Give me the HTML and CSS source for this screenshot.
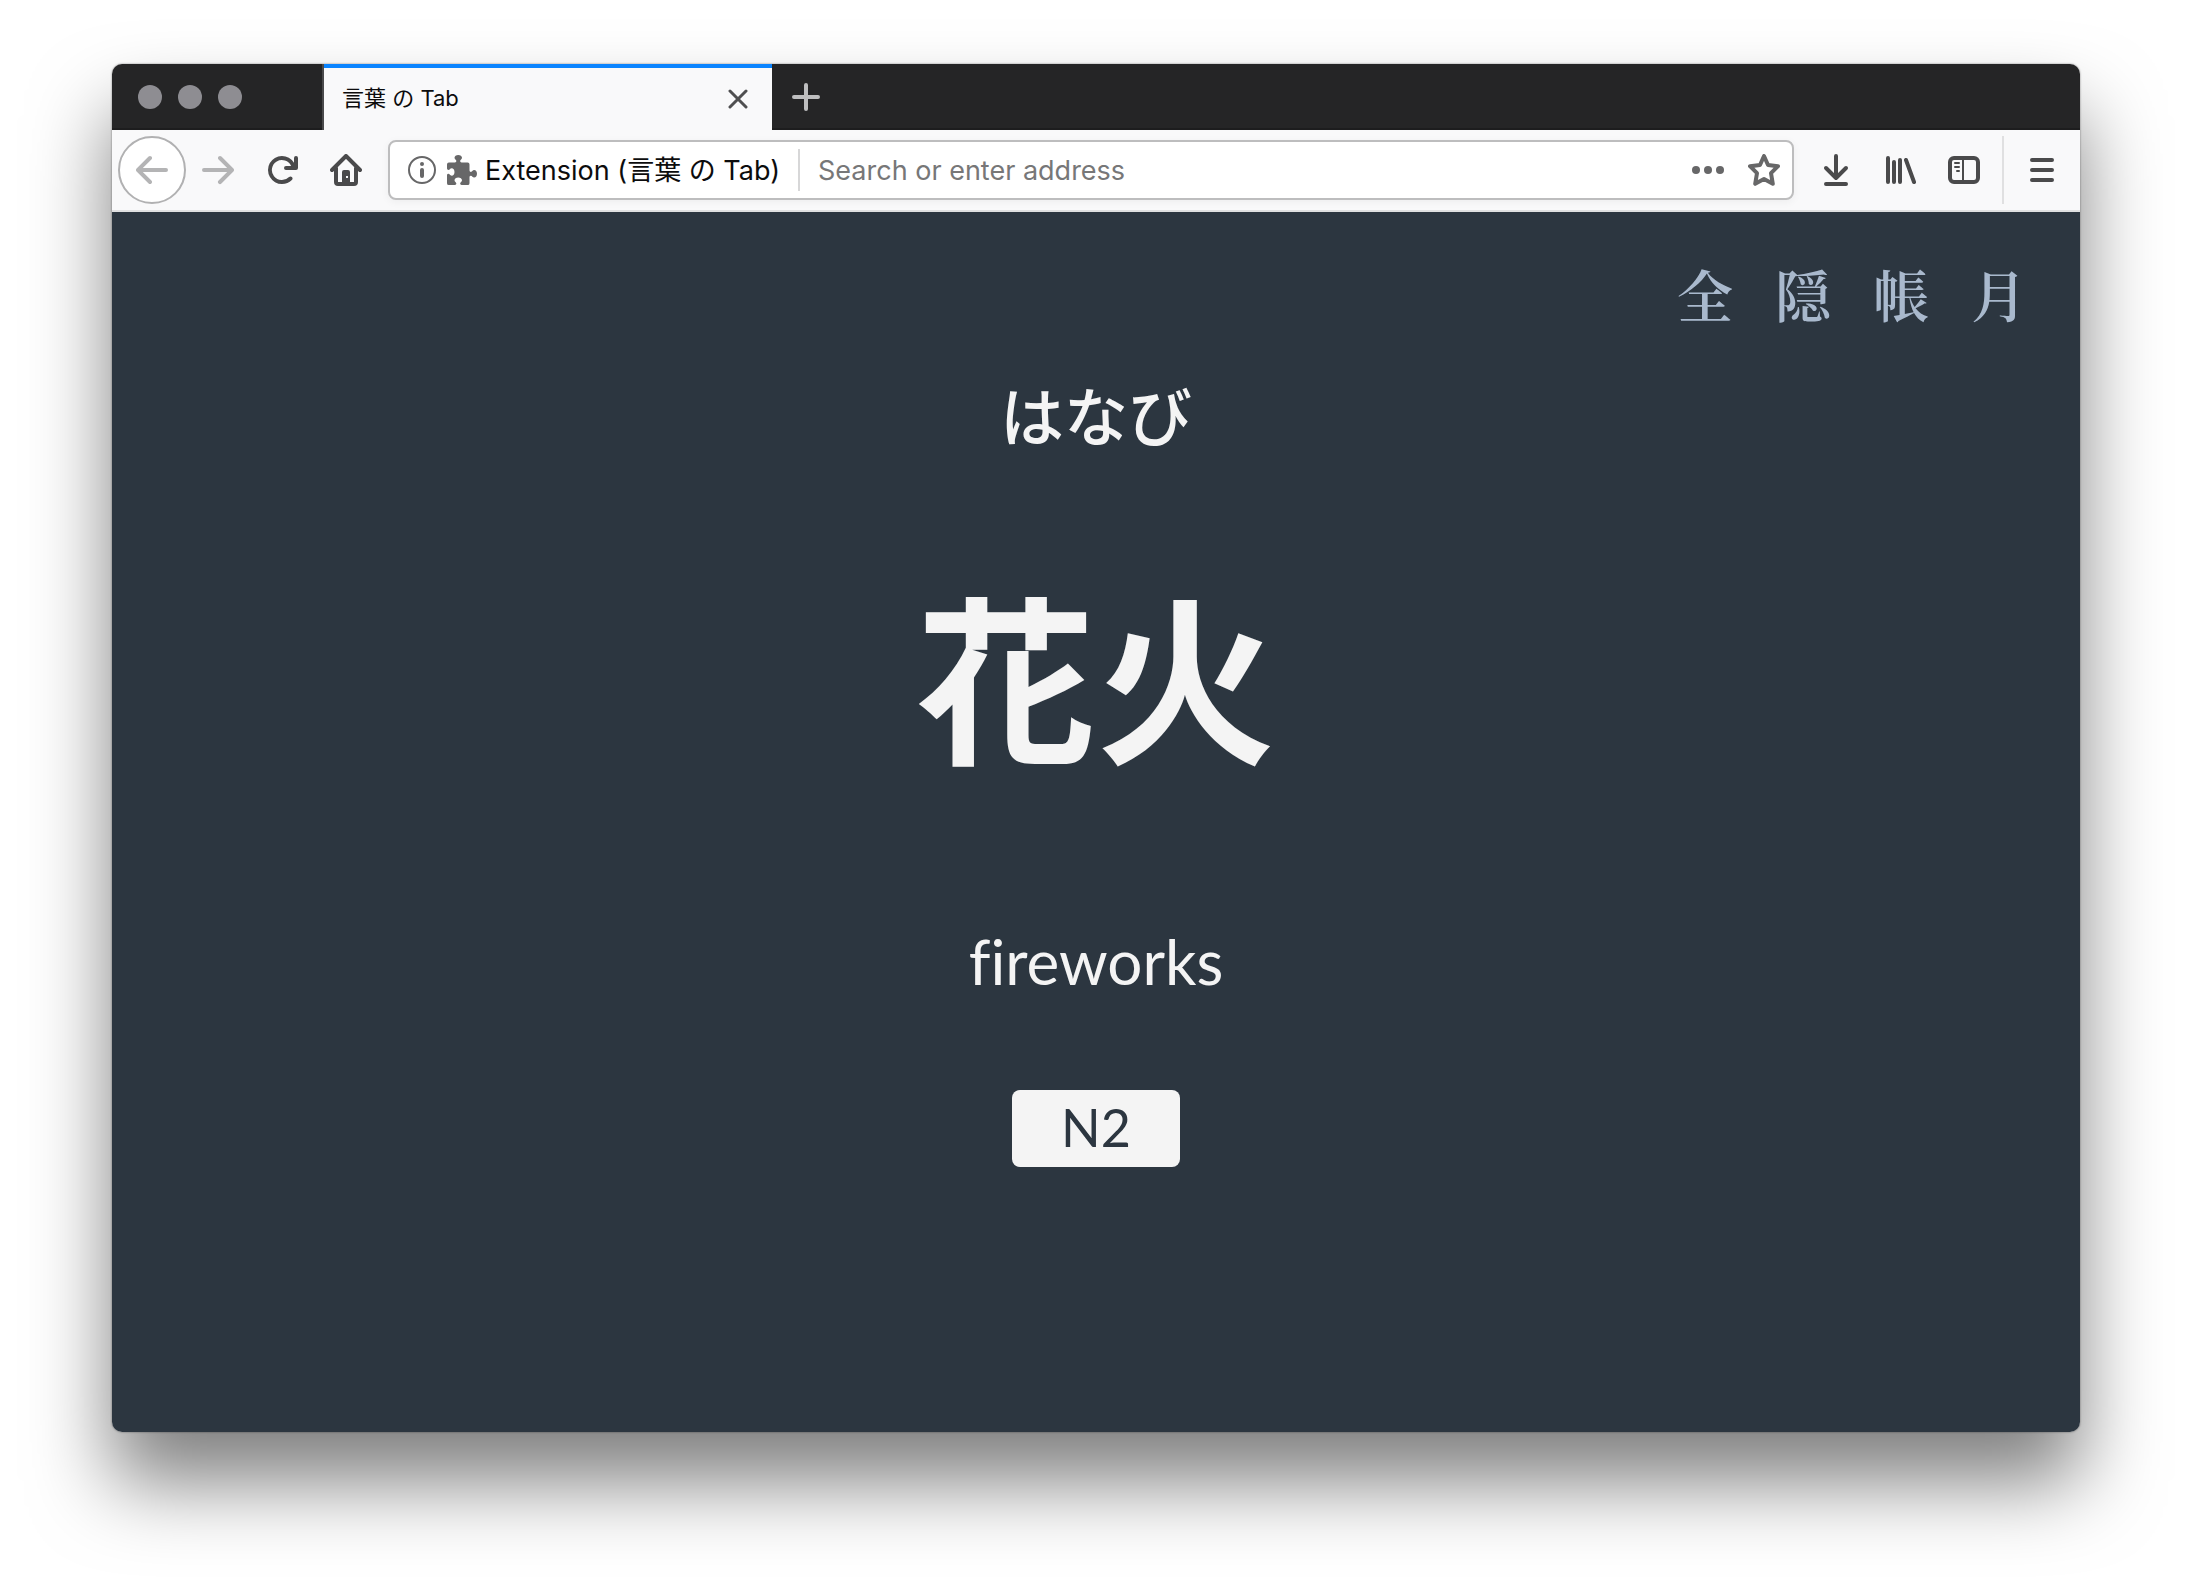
FILE: index.html
```html
<!DOCTYPE html>
<html lang="en">
<head>
<meta charset="utf-8">
<title>言葉 の Tab</title>
<link rel="stylesheet" href="styles.css">
</head>
<body>
<div class="window">
  <header class="tab-strip">
    <div class="lights"><span class="light"></span><span class="light"></span><span class="light"></span></div>
    <div class="tab">
      <span class="tab-title">言葉 の Tab</span>
      <button class="tab-close" type="button" aria-label="Close tab">
        <svg class="icon-close" viewBox="0 0 20 20"><path d="M2 2l16 16M18 2L2 18"/></svg>
      </button>
    </div>
    <button class="new-tab" type="button" aria-label="New tab">
      <svg class="icon-plus" viewBox="0 0 28 28"><path d="M14 2v24M2 14h24"/></svg>
    </button>
  </header>

  <div class="toolbar">
    <button class="back" type="button" aria-label="Back">
      <svg class="icon" viewBox="0 0 16 16"><path d="M15 7H3.414l4.293-4.293a1 1 0 0 0-1.414-1.414l-6 6a1 1 0 0 0 0 1.414l6 6a1 1 0 0 0 1.414-1.414L3.414 9H15a1 1 0 0 0 0-2z"/></svg>
    </button>
    <button class="tool tool-off" type="button" aria-label="Forward">
      <svg class="icon" viewBox="0 0 16 16"><path d="M15.707 7.293l-6-6a1 1 0 0 0-1.414 1.414L12.586 7H1a1 1 0 0 0 0 2h11.586l-4.293 4.293a1 1 0 1 0 1.414 1.414l6-6a1 1 0 0 0 0-1.414z"/></svg>
    </button>
    <button class="tool" type="button" aria-label="Reload">
      <svg class="icon" viewBox="0 0 16 16"><path d="M15 1a1 1 0 0 0-1 1v2.418A6.995 6.995 0 1 0 8 15a6.954 6.954 0 0 0 4.95-2.05 1 1 0 0 0-1.414-1.414A5.019 5.019 0 1 1 12.549 6H10a1 1 0 0 0 0 2h5a1 1 0 0 0 1-1V2a1 1 0 0 0-1-1z"/></svg>
    </button>
    <button class="tool" type="button" aria-label="Home">
      <svg class="icon icon-line" viewBox="0 0 16 16"><path d="M1 8l7-7 7 7M3 7v7a1 1 0 0 0 1 1h8a1 1 0 0 0 1-1V7"/><path class="solid" fill-rule="evenodd" d="M6 15V9a1 1 0 0 1 1-1h2a1 1 0 0 1 1 1v6zM8 11v1h1v-1z"/></svg>
    </button>

    <div class="urlbar">
      <svg class="icon-info" viewBox="0 0 28 28"><circle class="ring" cx="14" cy="14" r="13"/><circle cx="14" cy="8" r="2"/><rect x="12" y="12" width="4" height="10" rx="2"/></svg>
      <svg class="icon-puzzle" viewBox="0 0 16 16"><path d="M14.500 8c-.971 0-1 1-1.750 1a.765.765 0 0 1-.750-.750V5a1 1 0 0 0-1-1H7.750A.765.765 0 0 1 7 3.250c0-.750 1-.779 1-1.750C8 .635 7.100 0 6 0S4 .635 4 1.500c0 .971 1 1 1 1.750a.765.765 0 0 1-.750.750H1a1 1 0 0 0-1 1v2.250A.765.765 0 0 0 .750 8c.750 0 .779-1 1.750-1C3.365 7 4 7.900 4 9s-.635 2-1.500 2c-.971 0-1-1-1.750-1a.765.765 0 0 0-.750.750V15a1 1 0 0 0 1 1h3.250a.765.765 0 0 0 .750-.750c0-.750-1-.779-1-1.750 0-.865.900-1.500 2-1.500s2 .635 2 1.500c0 .971-1 1-1 1.750a.765.765 0 0 0 .750.750H11a1 1 0 0 0 1-1v-3.250a.765.765 0 0 1 .750-.750c.750 0 .779 1 1.750 1 .865 0 1.500-.900 1.500-2s-.635-2-1.500-2z"/></svg>
      <span class="identity">Extension (言葉 の Tab)</span>
      <input class="address" type="text" placeholder="Search or enter address" aria-label="Address">
      <button class="url-action" type="button" aria-label="Page actions">
        <svg class="icon" viewBox="0 0 16 16"><circle cx="2" cy="8" r="2"/><circle cx="8" cy="8" r="2"/><circle cx="14" cy="8" r="2"/></svg>
      </button>
      <button class="url-action" type="button" aria-label="Bookmark this page">
        <svg class="icon icon-line" viewBox="0 0 16 16"><path d="M8 1l2 4.500 5 .600-3.500 3.500.900 5.300L8 12.500l-4.400 2.400.900-5.300L1 6.100l5-.600z"/></svg>
      </button>
    </div>

    <button class="tool" type="button" aria-label="Downloads">
      <svg class="icon icon-line" viewBox="0 0 16 16"><path d="M8 1v11M3 7l5 5 5-5M3 15h10"/></svg>
    </button>
    <button class="tool" type="button" aria-label="Library">
      <svg class="icon icon-line" viewBox="0 0 16 16"><path d="M2 2v12M5 4v10M8 3v11M11 3l4 11"/></svg>
    </button>
    <button class="tool" type="button" aria-label="Sidebars">
      <svg class="icon icon-line" viewBox="0 0 16 16"><rect x="1" y="2" width="14" height="12" rx="2"/><path class="thin" d="M7.500 2v12M3.500 4.500h2M3.500 6.500h2M4.500 8.500h1"/></svg>
    </button>
    <button class="menu" type="button" aria-label="Menu">
      <svg class="icon icon-line" viewBox="0 0 16 16"><path d="M3 3h10M3 8h10M3 13h10"/></svg>
    </button>
  </div>

  <main class="page" lang="ja">
    <nav class="page-nav">
      <a href="#all">全</a>
      <a href="#hide">隠</a>
      <a href="#book">帳</a>
      <a href="#dark">月</a>
    </nav>
    <p class="reading">はなび</p>
    <h1 class="word">花火</h1>
    <p class="meaning" lang="en">fireworks</p>
    <span class="level" lang="en">N2</span>
  </main>
</div>
</body>
</html>
```
FILE: styles.css
```css
* {
  box-sizing: border-box;
}

body {
  margin: 0;
  min-height: 100vh;
  padding: 64px 112px 160px;
  display: flex;
  background: #fff;
  font-family: Inter, "Noto Sans CJK JP", sans-serif;
}

button {
  margin: 0;
  padding: 0;
  border: 0;
  background: none;
  color: inherit;
  display: flex;
  align-items: center;
  justify-content: center;
}

svg {
  display: block;
  flex: none;
  fill: currentColor;
}

.window {
  flex: 1;
  display: flex;
  flex-direction: column;
  border-radius: 10px;
  overflow: hidden;
  box-shadow: 0 0 2px rgba(0, 0, 0, 0.5), 0 50px 80px rgba(0, 0, 0, 0.5);
}

/* Tab strip */
.tab-strip {
  display: flex;
  height: 66px;
  background: #252526;
  box-shadow: inset 0 -2px #1d1d1e;
}

.lights {
  display: flex;
  align-items: center;
  gap: 16px;
  width: 212px;
  padding-left: 26px;
  border-right: 2px solid #4a4a4b;
}

.light {
  width: 24px;
  height: 24px;
  border-radius: 50%;
  background: #8e8d92;
}

.tab {
  width: 448px;
  display: flex;
  align-items: center;
  justify-content: space-between;
  padding: 0 24px 0 18px;
  border-top: 4px solid #0a84ff;
  background: #f9f9fa;
}

.tab-title {
  padding-bottom: 2px;
  font-size: 22px;
  line-height: 32px;
  color: #0c0c0d;
}

.tab-close {
  color: #4f4f50;
}

.icon-close {
  width: 20px;
  height: 20px;
}

.icon-plus {
  width: 28px;
  height: 28px;
}

.icon-close path,
.icon-plus path {
  stroke: currentColor;
  stroke-width: 3;
  stroke-linecap: round;
}

.icon-plus path {
  stroke-width: 4;
}

.new-tab {
  width: 68px;
  color: #bebebf;
}

/* Navigation toolbar */
.toolbar {
  display: flex;
  align-items: center;
  height: 82px;
  padding-left: 6px;
  background: #f9f9fa;
  border-bottom: 2px solid #e0e0e1;
  color: #4a4a4b;
}

.icon {
  width: 32px;
  height: 32px;
}

.icon-line {
  fill: none;
  stroke: currentColor;
  stroke-width: 2;
  stroke-linecap: round;
  stroke-linejoin: round;
}

.icon-line .solid {
  fill: currentColor;
  stroke: none;
}

.icon-line .thin {
  stroke-width: 1;
}

.back {
  width: 68px;
  height: 68px;
  border: 2px solid #b1b1b2;
  border-radius: 50%;
  background: #fff;
  color: #b4b4b5;
}

.tool {
  width: 64px;
  height: 64px;
}

.tool-off {
  color: #b4b4b5;
}

.menu {
  width: 78px;
  height: 68px;
  margin-left: 6px;
  border-left: 2px solid #e0e0e1;
}

.urlbar {
  flex: 1;
  display: flex;
  align-items: center;
  height: 60px;
  margin: 0 10px;
  padding: 0 12px 0 18px;
  border: 2px solid #bdbdbe;
  border-radius: 8px;
  background: #fff;
  box-shadow: 0 2px 8px rgba(0, 0, 0, 0.05);
  color: #676768;
}

.icon-info {
  width: 28px;
  height: 28px;
}

.icon-info .ring {
  fill: none;
  stroke: currentColor;
  stroke-width: 2;
}

.icon-puzzle {
  width: 30px;
  height: 30px;
  margin: 0 8px 0 11px;
}

.identity {
  padding: 2px 18px 0 0;
  border-right: 2px solid #d7d7d8;
  font-size: 27px;
  line-height: 40px;
  color: #0c0c0d;
  white-space: nowrap;
}

.address {
  flex: 1;
  min-width: 0;
  padding: 2px 0 0 18px;
  border: 0;
  outline: 0;
  background: none;
  font: 27px/40px Inter, "Noto Sans CJK JP", sans-serif;
}

.address::placeholder {
  color: #777778;
  opacity: 1;
}

.url-action {
  width: 56px;
  height: 56px;
}

.url-action:last-child {
  margin-right: -12px;
}

/* New tab page */
.page {
  flex: 1;
  display: flex;
  flex-direction: column;
  align-items: center;
  background: #2c3640;
  color: #f4f4f4;
}

.page-nav {
  align-self: flex-end;
  display: flex;
  gap: 42px;
  padding: 41px 53px 0 0;
  font: 600 56px/80px "Noto Serif CJK JP", "Noto Sans CJK JP", serif;
}

.page-nav a {
  color: #a9b9cd;
  text-decoration: none;
}

.reading {
  margin: 32px 0 0;
  font: 500 64px/96px "Noto Sans CJK JP", sans-serif;
}

.word {
  margin: 76px 0 0;
  font: 700 180px/270px "Noto Sans CJK JP", sans-serif;
}

.meaning {
  margin: 114px 0 0;
  font: 62px/80px Lato, sans-serif;
  font-variant-ligatures: none;
}

.level {
  width: 168px;
  margin-top: 89px;
  padding-bottom: 3px;
  border-radius: 8px;
  background: #f4f4f4;
  color: #2c3640;
  font: 52px/74px Lato, sans-serif;
  text-align: center;
}
```
